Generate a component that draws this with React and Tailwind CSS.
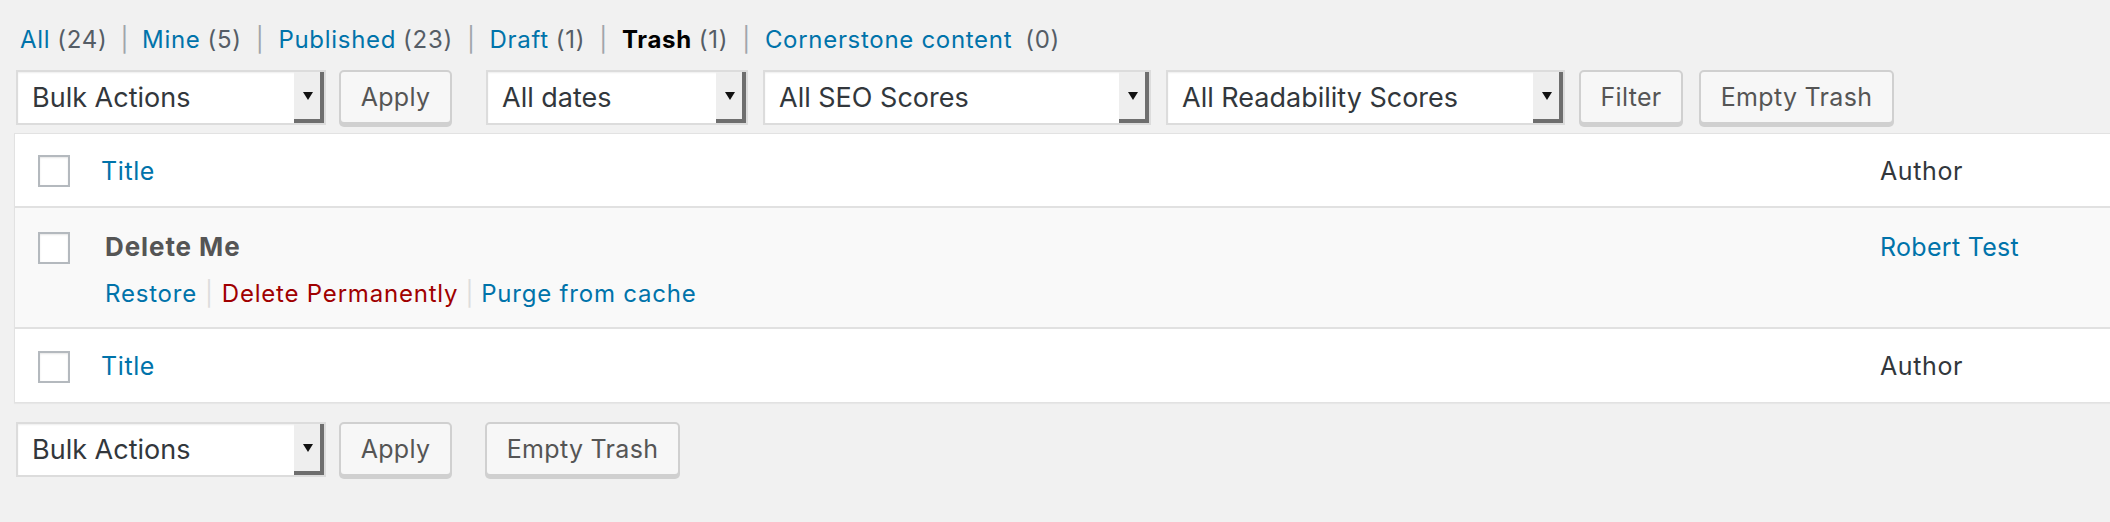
import React from "react";

function Select({ label, w }) {
  return (
    <div
      className={`relative flex h-[55px] shrink-0 items-stretch border-2 border-[#dcdcdc] bg-white shadow-[inset_0_1px_2px_rgba(0,0,0,0.07)] ${w}`}
    >
      <div className="flex flex-1 items-center pl-[14px] text-[27px] leading-none text-[#32373c]">
        {label}
      </div>
      <div className="relative flex w-[30px] items-center justify-center border-r-[4px] border-b-[4px] border-[#6e6e6e] bg-[#eeeeee]">
        <svg width="10" height="8" viewBox="0 0 10 8" className="ml-[2px]">
          <path d="M0 0 L10 0 L5 8 Z" fill="#111" />
        </svg>
      </div>
    </div>
  );
}

function Button({ children, w }) {
  return (
    <div
      className={`flex h-[54px] shrink-0 items-center justify-center rounded-[5px] border-2 border-[#d0d0d0] bg-[#f7f7f7] text-[25px] leading-none tracking-[0.3px] text-[#555555] shadow-[0_3px_0_#d0d0d0] ${w}`}
    >
      {children}
    </div>
  );
}

function Checkbox() {
  return (
    <div className="h-[32px] w-[32px] shrink-0 border-2 border-[#b4b9be] bg-white shadow-[inset_0_1px_2px_rgba(0,0,0,0.1)]" />
  );
}

function Sep({ first }) {
  return <span className={first ? "ml-[13px] mr-[13px] text-[#a0a5aa]" : "mx-[14px] text-[#a0a5aa]"}>|</span>;
}

export default function App() {
  return (
    <div className="h-[522px] w-[2110px] overflow-hidden bg-[#f1f1f1] pl-[14px] font-[Inter,'Liberation_Sans',sans-serif] text-[#32373c]">
      {/* status links */}
      <div className="mt-[25px] flex h-[30px] items-center pl-[6px] text-[24px] leading-[30px] tracking-[0.7px] text-[#555d66]">
        <span className="text-[#0073aa]">All</span>
        <span className="ml-[7px]">(24)</span>
        <Sep first />
        <span className="text-[#0073aa]">Mine</span>
        <span className="ml-[7px]">(5)</span>
        <Sep />
        <span className="text-[#0073aa]">Published</span>
        <span className="ml-[7px]">(23)</span>
        <Sep />
        <span className="text-[#0073aa]">Draft</span>
        <span className="ml-[7px]">(1)</span>
        <Sep />
        <span className="font-bold text-black">Trash</span>
        <span className="ml-[7px]">(1)</span>
        <Sep />
        <span className="text-[#0073aa]">Cornerstone content</span>
        <span className="ml-[13px]">(0)</span>
      </div>

      {/* top controls */}
      <div className="mt-[15px] flex items-start pl-[2px]">
        <Select label="Bulk Actions" w="w-[310px]" />
        <div className="ml-[13px]">
          <Button w="w-[113px]">Apply</Button>
        </div>
        <div className="ml-[34px]">
          <Select label="All dates" w="w-[262px]" />
        </div>
        <div className="ml-[15px]">
          <Select label="All SEO Scores" w="w-[388px]" />
        </div>
        <div className="ml-[15px]">
          <Select label="All Readability Scores" w="w-[399px]" />
        </div>
        <div className="ml-[14px]">
          <Button w="w-[104px]">Filter</Button>
        </div>
        <div className="ml-[16px]">
          <Button w="w-[195px]">Empty Trash</Button>
        </div>
      </div>

      {/* table */}
      <div className="mt-[8px] w-[2110px] border border-[#e2e2e2] bg-white shadow-[0_1px_1px_rgba(0,0,0,0.04)]">
        {/* header */}
        <div className="flex h-[74px] items-center border-b-2 border-[#e1e1e1] pt-[2px]">
          <div className="flex w-[1865px] shrink-0 items-center pl-[23px]">
            <Checkbox />
            <span className="ml-[31px] text-[25px] leading-none tracking-[0.6px] text-[#0073aa]">Title</span>
          </div>
          <div className="text-[25px] leading-none tracking-[0.6px] text-[#32373c]">Author</div>
        </div>
        {/* row */}
        <div className="flex h-[121px] items-start border-b-2 border-[#e1e1e1] bg-[#f9f9f9] pt-[24px]">
          <div className="flex w-[1865px] shrink-0 items-start pl-[23px]">
            <Checkbox />
            <div className="ml-[35px] flex flex-col">
              <div className="h-[30px] text-[26px] font-bold leading-[30px] tracking-[0.9px] text-[#555555]">Delete Me</div>
              <div className="mt-[17px] flex h-[30px] items-center text-[24px] leading-[30px] tracking-[0.8px]">
                <span className="text-[#0073aa]">Restore</span>
                <span className="mx-[8px] text-[#dddddd]">|</span>
                <span className="text-[#a00000]">Delete Permanently</span>
                <span className="mx-[7px] text-[#dddddd]">|</span>
                <span className="text-[#0073aa]">Purge from cache</span>
              </div>
            </div>
          </div>
          <div className="h-[30px] text-[25px] leading-[30px] tracking-[0.3px] text-[#0073aa]">Robert Test</div>
        </div>
        {/* footer */}
        <div className="flex h-[73px] items-center pt-[2px]">
          <div className="flex w-[1865px] shrink-0 items-center pl-[23px]">
            <Checkbox />
            <span className="ml-[31px] text-[25px] leading-none tracking-[0.6px] text-[#0073aa]">Title</span>
          </div>
          <div className="text-[25px] leading-none tracking-[0.6px] text-[#32373c]">Author</div>
        </div>
      </div>

      {/* bottom controls */}
      <div className="mt-[19px] flex items-start pl-[2px]">
        <Select label="Bulk Actions" w="w-[310px]" />
        <div className="ml-[13px]">
          <Button w="w-[113px]">Apply</Button>
        </div>
        <div className="ml-[33px]">
          <Button w="w-[195px]">Empty Trash</Button>
        </div>
      </div>
    </div>
  );
}
